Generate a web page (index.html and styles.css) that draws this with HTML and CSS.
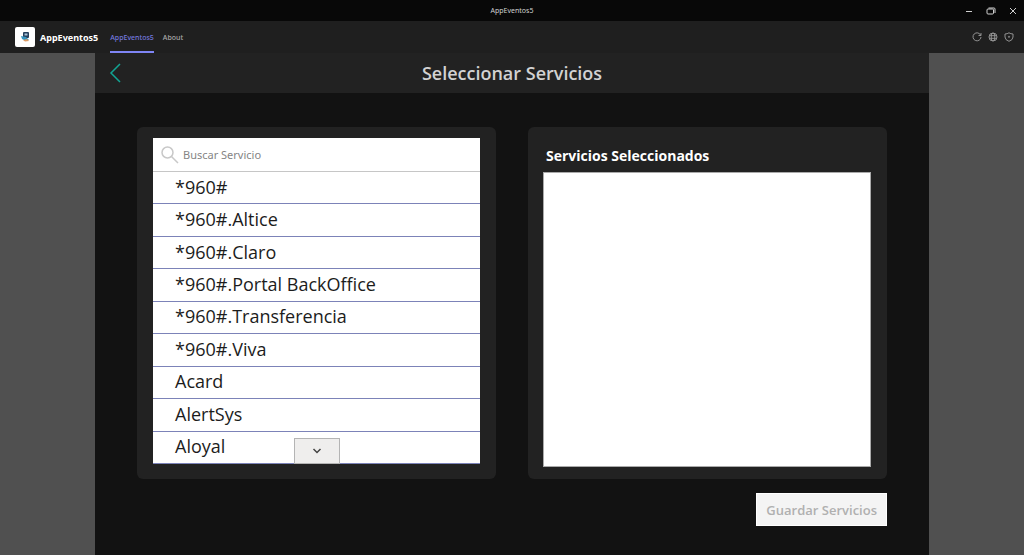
FILE: index.html
```html
<!DOCTYPE html>
<html lang="es">
<head>
<meta charset="utf-8">
<meta name="viewport" content="width=device-width, initial-scale=1">
<title>AppEventos5</title>
<link rel="stylesheet" href="styles.css">
</head>
<body>
<div class="window">
  <div class="titlebar">
    <span class="window-title">AppEventos5</span>
    <div class="window-controls">
      <button type="button" aria-label="Minimizar"><svg width="8" height="8" viewBox="0 0 8 8"><path d="M1 4.500h6"/></svg></button>
      <button type="button" aria-label="Restaurar"><svg width="10" height="8" viewBox="0 0 10 8"><rect x="1" y="2" width="6.500" height="5" rx="1"/><path d="M2.500 1h5.500q1 0 1 1v4"/></svg></button>
      <button type="button" aria-label="Cerrar"><svg width="8" height="8" viewBox="0 0 8 8"><path d="M1 1l6 6M7 1L1 7"/></svg></button>
    </div>
  </div>
  <header class="tabbar">
    <svg class="app-logo" width="20" height="20" viewBox="0 0 20 20" aria-hidden="true">
      <rect width="20" height="20" rx="2" fill="#fff"/>
      <rect x="8" y="5" width="6" height="6" rx="1" fill="#243f5c"/>
      <path d="M9.500 6.500h3v2h-3z" fill="#a9c3d6"/>
      <path d="M6 9l5 1 3 3-3 1-4-2z" fill="#3695bf"/>
      <path d="M8 13l4-1 2 2-4 .5z" fill="#dd9a62"/>
    </svg>
    <span class="app-name">AppEventos5</span>
    <nav class="tabs">
      <a class="tab tab-active" href="#app">AppEventos5</a>
      <a class="tab" href="#about">About</a>
    </nav>
    <div class="tools">
      <button type="button" aria-label="Recargar"><svg width="10" height="10" viewBox="0 0 10 10"><path d="M8.700 3.300A4 4 0 1 0 9 5M9 1v2.500H6.500"/></svg></button>
      <button type="button" aria-label="Sitio web"><svg width="10" height="10" viewBox="0 0 10 10"><circle cx="5" cy="5" r="4"/><ellipse cx="5" cy="5" rx="1.800" ry="4"/><path d="M1 3.700h8M1 6.300h8"/></svg></button>
      <button type="button" aria-label="Privacidad"><svg width="10" height="10" viewBox="0 0 10 10"><path d="M5 .8Q6.800 2 9 2v3Q9 8 5 9.300 1 8 1 5V2Q3.200 2 5 .8z"/><circle cx="5" cy="4.800" r=".6"/></svg></button>
    </div>
  </header>
  <main class="stage">
    <div class="screen">
      <div class="screen-header">
        <button class="back" type="button" aria-label="Volver"><svg width="12" height="20" viewBox="0 0 12 20"><path d="M11 1L2 10l9 9"/></svg></button>
        <h1>Seleccionar Servicios</h1>
      </div>
      <div class="content">
        <section class="panel">
          <div class="picker">
            <div class="search">
              <svg width="18" height="18" viewBox="0 0 18 18" aria-hidden="true"><circle cx="6.500" cy="6.500" r="5.500"/><path d="M10.500 10.500L17 17"/></svg>
              <input type="text" placeholder="Buscar Servicio" aria-label="Buscar Servicio">
            </div>
            <ul class="services">
              <li>*960#</li>
              <li>*960#.Altice</li>
              <li>*960#.Claro</li>
              <li>*960#.Portal BackOffice</li>
              <li>*960#.Transferencia</li>
              <li>*960#.Viva</li>
              <li>Acard</li>
              <li>AlertSys</li>
              <li>Aloyal</li>
            </ul>
            <button class="more" type="button" aria-label="Ver más"><svg width="10" height="8" viewBox="0 0 10 8"><path d="M1.500 2L5 5.500 8.500 2"/></svg></button>
          </div>
        </section>
        <section class="panel panel-selected">
          <h2>Servicios Seleccionados</h2>
          <div class="selected"></div>
        </section>
      </div>
      <div class="actions">
        <button class="save" type="button" disabled>Guardar Servicios</button>
      </div>
    </div>
  </main>
</div>
</body>
</html>
```
FILE: styles.css
```css
* { box-sizing: border-box; }
body {
  margin: 0;
  font-family: "Open Sans", "Noto Sans", sans-serif;
  background: #505050;
}
button {
  border: 0;
  padding: 0;
  background: none;
  color: inherit;
  font-family: inherit;
}
svg {
  display: block;
  fill: none;
  stroke: currentColor;
}
.window {
  display: flex;
  flex-direction: column;
  min-height: 100vh;
}
.titlebar {
  display: grid;
  grid-template-columns: 1fr auto 1fr;
  align-items: center;
  height: 21px;
  padding-right: 7px;
  padding-left: 7px;
  background: #080808;
  color: #d0d0d0;
}
.window-title {
  grid-column: 2;
  font-family: "Noto Sans", sans-serif;
  font-size: 7px;
}
.window-controls {
  display: flex;
  justify-content: flex-end;
  gap: 13px;
}
.tabbar {
  display: flex;
  align-items: center;
  height: 32px;
  padding: 0 10px 0 15px;
  background: #1f1f1f;
}
.app-logo { stroke: none; }
.app-name {
  margin-left: 5px;
  color: #fff;
  font-family: "Noto Sans", sans-serif;
  font-size: 9px;
  font-weight: 700;
}
.tabs {
  display: flex;
  align-self: stretch;
  gap: 9px;
  margin-left: 12px;
}
.tab {
  display: flex;
  align-items: center;
  border-top: 2px solid transparent;
  border-bottom: 2px solid transparent;
  color: #a8a8a8;
  font-family: "Noto Sans", sans-serif;
  font-size: 7px;
  font-weight: 500;
  text-decoration: none;
}
.tab-active {
  border-bottom-color: #7f85f5;
  color: #7378df;
}
.tools {
  display: flex;
  gap: 6px;
  margin-left: auto;
  color: #929292;
}
.stage {
  display: flex;
  flex: 1;
  padding: 0 95px;
}
.screen {
  display: flex;
  flex: 1;
  flex-direction: column;
  background: #121212;
}
.screen-header {
  display: grid;
  grid-template-columns: 40px 1fr 40px;
  align-items: center;
  height: 40px;
  background: #222;
}
.back {
  justify-self: center;
  color: #12a594;
}
.back svg { stroke-width: 1.500; }
h1 {
  margin: 0;
  color: #d2d2d2;
  font-size: 18px;
  font-weight: 600;
  text-align: center;
}
.content {
  display: grid;
  flex: 1;
  grid-template-columns: 1fr 1fr;
  gap: 32px;
  padding: 34px 42px 0;
}
.panel {
  display: flex;
  flex-direction: column;
  padding: 11px 16px 15px;
  border-radius: 6px;
  background: #222;
}
.picker {
  position: relative;
  display: flex;
  flex: 1;
  flex-direction: column;
  background: #fff;
}
.search {
  display: flex;
  align-items: center;
  gap: 4px;
  height: 34px;
  padding: 0 8px;
  border-bottom: 1px solid #c6c6c6;
  color: #c8c8c8;
}
.search svg { stroke-width: 1.500; }
.search input {
  flex: 1;
  min-width: 0;
  border: 0;
  padding: 0;
  outline: 0;
  background: none;
  color: #333;
  font-family: "Noto Sans", sans-serif;
  font-size: 11px;
}
.search input::placeholder { color: #858585; }
.services {
  display: flex;
  flex: 1;
  flex-direction: column;
  margin: 0;
  padding: 0;
  list-style: none;
}
.services li {
  display: flex;
  flex: 1;
  align-items: center;
  padding: 0 22px 2px;
  border-bottom: 1px solid #7c83b8;
  color: #1c1c1c;
  font-size: 18px;
  line-height: 24px;
}
.more {
  position: absolute;
  bottom: 0;
  left: 50%;
  display: grid;
  place-items: center;
  width: 46px;
  height: 26px;
  border: 1px solid #b4b4b4;
  background: #efeeed;
  color: #444;
  transform: translateX(-50%);
}
.more svg { stroke-width: 1.500; }
.panel-selected { padding: 11px 16px 12px 15px; }
h2 {
  margin: 0;
  padding: 8px 3px 6px;
  color: #fff;
  font-size: 14px;
  font-weight: 700;
  line-height: 20px;
}
.selected {
  flex: 1;
  border: 1px solid #aaa;
  background: #fff;
}
.actions {
  display: flex;
  justify-content: flex-end;
  padding: 14px 42px 29px;
}
.save {
  height: 33px;
  padding: 0 9px;
  border: 1px solid #fff;
  background: #f4f4f4;
  color: #b0b0b0;
  font-size: 13px;
  font-weight: 600;
}
```
